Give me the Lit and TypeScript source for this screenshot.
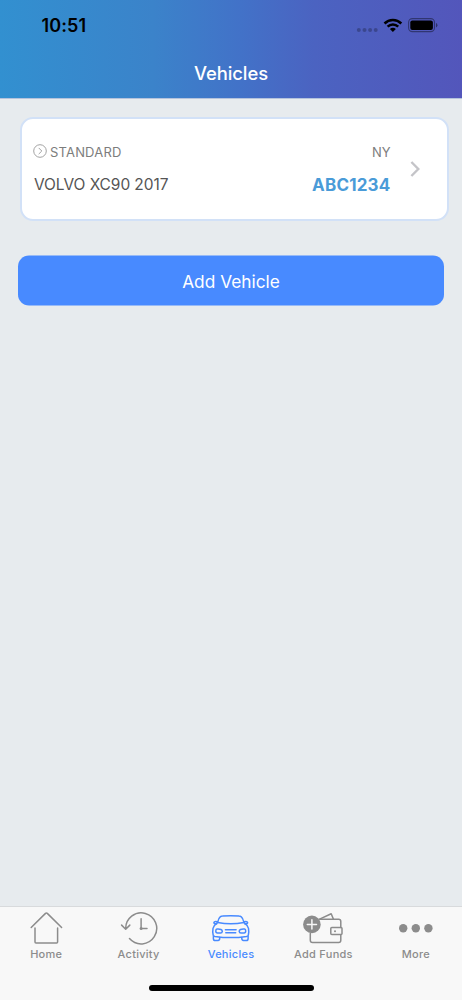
import { LitElement, html, svg, css } from "lit";
import { customElement } from "lit/decorators.js";

const homeIcon = svg`<svg class="icon" viewBox="24.2 911 44 34">
  <path d="M31.4 927.5 45.7 913.4Q46.6 912.6 47.5 913.4L61.8 927.5M35.2 928V942Q35.2 943 36.2 943H56.8Q57.8 943 57.8 942V928"/></svg>`;

const activityIcon = svg`<svg class="icon" viewBox="116.6 911 44 34">
  <path d="M125.3 928.8A15.5 15.5 0 1 1 129.1 938.6M121.2 925.1 125.3 929.2 129.4 925.1M140.7 918.8V928.4H146.6"/>
  <circle class="solid" cx="140.7" cy="928.6" r="1.5"/></svg>`;

const carIcon = svg`<svg class="icon" viewBox="209 911 44 34">
  <path d="M217.6 922.4C218.2 919.6 219 917.8 220.2 916.9Q221.2 916.2 222.5 916.1Q230.8 915.2 239 916.1Q240.3 916.2 241.3 916.9C242.5 917.8 243.3 919.6 243.9 922.4"/>
  <path d="M217.6 922.4Q230.8 925.2 243.9 922.4"/>
  <path d="M216.6 923.9Q213.9 923.9 213.9 922.4Q214.3 920.9 217.4 921.7M244.9 923.9Q247.6 923.9 247.6 922.4Q247.2 920.9 244.1 921.7"/>
  <path d="M217.6 922.4Q213.8 925.4 213 928.4Q212.4 932 213.2 935.2Q213.5 936.1 215 936.4Q230.8 938.8 246.5 936.4Q248 936.1 248.3 935.2Q249.1 932 248.5 928.4Q247.7 925.4 243.9 922.4"/>
  <path d="M213.4 936.2V938.8Q213.4 940.6 215.2 940.6H218Q219.8 940.6 219.8 937.6M248.1 936.2V938.8Q248.1 940.6 246.3 940.6H243.5Q241.7 940.6 241.7 937.6"/>
  <path d="M217 929.1Q219 928.8 221 929.5Q222.3 930 222.3 931.3Q222.1 933 220.6 933H217.5Q215.8 933 215.8 931Q215.8 929.3 217 929.1ZM244.5 929.1Q242.5 928.8 240.5 929.5Q239.2 930 239.2 931.3Q239.4 933 240.9 933H244Q245.7 933 245.7 931Q245.7 929.3 244.5 929.1Z"/>
  <path d="M225.4 929.7H236.1M225.8 932.7H235.7"/></svg>`;

const fundsIcon = svg`<svg class="icon" viewBox="301.4 911 44 34">
  <path d="M320 919.3H339Q341.2 919.3 341.2 921.5V927.4M341.2 934.7V940.3Q341.2 942.6 339 942.6H313Q310.7 942.6 310.7 940.3V933.5"/>
  <path d="M320 919.1 331.6 913.7 333.8 919.1"/>
  <rect x="331.2" y="927.6" width="11.2" height="7" rx="1"/>
  <circle class="solid" cx="335.4" cy="931.2" r="1"/>
  <circle class="solid" cx="312.3" cy="924.4" r="8.8"/>
  <path class="plus" d="M307.7 924.4H316.9M312.3 919.8V929"/></svg>`;

const moreIcon = svg`<svg class="icon" viewBox="393.8 911 44 34">
  <circle class="solid" cx="403" cy="928.3" r="4.2"/><circle class="solid" cx="415.6" cy="928.3" r="4.2"/><circle class="solid" cx="428.2" cy="928.3" r="4.2"/></svg>`;

const tabs = [
  { label: "Home", icon: homeIcon },
  { label: "Activity", icon: activityIcon },
  { label: "Vehicles", icon: carIcon, active: true },
  { label: "Add Funds", icon: fundsIcon },
  { label: "More", icon: moreIcon },
];

@customElement("app-root")
export class AppRoot extends LitElement {
  static styles = css`
    :host {
      display: flex;
      flex-direction: column;
      height: 1000px;
      background: #e7ebee;
      font-family: Inter, sans-serif;
      overflow: hidden;
    }
    header {
      box-sizing: border-box;
      height: 99px;
      flex: none;
      background: linear-gradient(90deg, #3290d0 0%, #3b83ca 33%, #4272c8 52%, #4b63c1 68%, #5356bb 100%);
      border-bottom: 1px solid #b5c3dc;
      background-origin: border-box;
    }
    .status {
      display: flex;
      justify-content: space-between;
      align-items: center;
      height: 50px;
      padding: 0 23px 0 41.5px;
    }
    .time { font-size: 18px; font-weight: 600; line-height: 22px; color: #000; padding-top: 2px; letter-spacing: 0.1px; }
    .signals { display: block; width: 84px; height: 16px; }
    h1 {
      margin: 11px 0 0;
      text-align: center;
      font-size: 18.4px;
      line-height: 24px;
      font-weight: 550;
      letter-spacing: -0.05px;
      color: #fff;
    }
    main { flex: 1; padding: 18px 13px 0 20px; }
    .card {
      box-sizing: border-box;
      display: flex;
      align-items: center;
      height: 104px;
      border: 2px solid #d2e1f7;
      border-radius: 13px;
      background: #fff;
      padding: 0 26px 0 12px;
    }
    .details { flex: 1; display: grid; gap: 11px; padding-bottom: 2px; }
    .row { display: flex; justify-content: space-between; align-items: center; height: 22px; }
    .kind { display: flex; align-items: center; gap: 3px; margin-left: -1px; letter-spacing: 0.18px; }
    .kind, .state { font-size: 13px; color: #7d7d7d; }
    .ring { width: 14px; height: 14px; fill: none; stroke: #999; stroke-width: 0.9; display: block; margin-top: -2px; }
    .model { font-size: 15.5px; letter-spacing: -0.08px; color: #555; }
    .plate { font-size: 17px; font-weight: 700; letter-spacing: 0.2px; color: #4a9bd8; }
    .chevron { width: 12px; height: 18px; margin-left: 18px; margin-right: 0.5px; fill: none; stroke: #c4c4c8; stroke-width: 2.4; }
    .add {
      display: block;
      width: 426px;
      height: 50px;
      margin: 34px 0 0 -2px;
      padding: 2px 0 0;
      border: 0;
      border-radius: 11px;
      background: #488aff;
      color: #fff;
      font: 400 17.3px/48px Inter, sans-serif;
      transform: translateY(0.5px);
    }
    nav {
      box-sizing: border-box;
      flex: none;
      height: 94px;
      border-top: 1px solid #d8dadc;
      background: #f8f8f8;
    }
    .tabs { display: flex; padding-top: 4px; }
    .tab {
      flex: 1 1 0;
      display: flex;
      flex-direction: column;
      align-items: center;
      color: #8c8c8c;
      font-size: 11px;
      line-height: 14px;
      font-weight: 500;
      letter-spacing: 0.27px;
      gap: 2px;
      white-space: nowrap;
    }
    .active { color: #488aff; }
    .icon {
      display: block;
      width: 44px;
      height: 34px;
      fill: none;
      stroke: currentColor;
      stroke-width: 1.5;
      stroke-linecap: round;
      stroke-linejoin: round;
    }
    .solid { fill: currentColor; stroke: none; }
    .plus { stroke: #f8f8f8; stroke-width: 1.5; }
    .indicator { width: 165px; height: 6px; margin: 24px auto 0; border-radius: 3px; background: #000; }
  `;

  render() {
    return html`
      <header>
        <div class="status">
          <span class="time">10:51</span>
          <svg class="signals" viewBox="355 17 84 16">
            <g fill="#000" fill-opacity=".25">
              <circle cx="358.8" cy="30" r="2"/><circle cx="364.5" cy="30" r="2"/><circle cx="370.1" cy="30" r="2"/><circle cx="375.7" cy="30" r="2"/>
            </g>
            <g fill="none" stroke="#000" stroke-width="2.5">
              <path d="M384.5 23.5A12 12 0 0 1 401.3 23.5"/>
              <path d="M387.6 26.7A7.6 7.6 0 0 1 398.2 26.7"/>
            </g>
            <path d="M389.9 29.1A4.3 4.3 0 0 1 395.9 29.1L392.9 32.1Z"/>
            <rect x="408.6" y="18.6" width="25.9" height="13" rx="3.8" fill="none" stroke="#000" stroke-opacity=".4" stroke-width="1.1"/>
            <rect x="410.3" y="20.4" width="22.6" height="9.6" rx="2"/>
            <path d="M436 23A2.4 2.4 0 0 1 436 27.4Z" fill-opacity=".45"/>
          </svg>
        </div>
        <h1>Vehicles</h1>
      </header>
      <main>
        <section class="card">
          <div class="details">
            <div class="row">
              <span class="kind">
                <svg class="ring" viewBox="0 0 14 14"><circle cx="7" cy="7" r="6.3"/><path d="M5.7 3.9 8.8 7 5.7 10.1"/></svg>
                STANDARD
              </span>
              <span class="state">NY</span>
            </div>
            <div class="row">
              <span class="model">VOLVO XC90 2017</span>
              <span class="plate">ABC1234</span>
            </div>
          </div>
          <svg class="chevron" viewBox="0 0 12 18"><path d="M2.4 2 9.3 9 2.4 16"/></svg>
        </section>
        <button class="add">Add Vehicle</button>
      </main>
      <nav>
        <div class="tabs">
          ${tabs.map((t) => html`<div class="tab ${t.active ? "active" : ""}">${t.icon}<span>${t.label}</span></div>`)}
        </div>
        <div class="indicator"></div>
      </nav>
    `;
  }
}
